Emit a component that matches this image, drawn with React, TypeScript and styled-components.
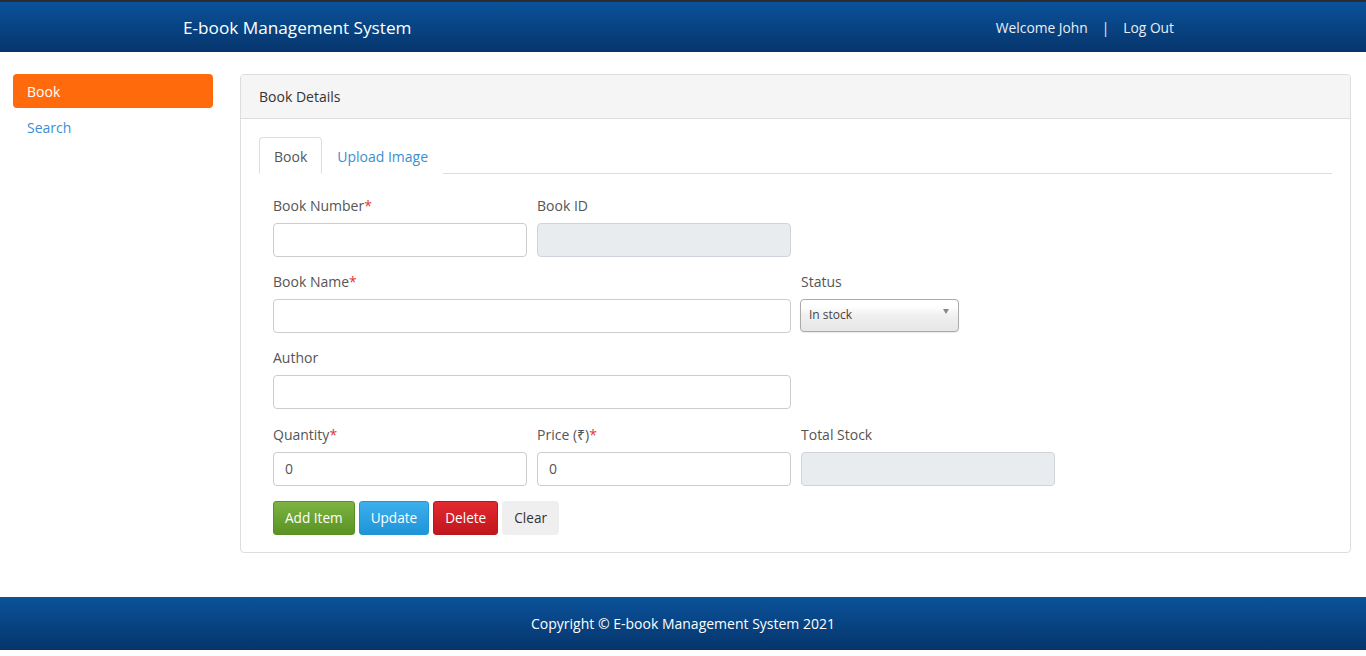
import React from "react";
import styled, { createGlobalStyle } from "styled-components";

const GlobalStyle = createGlobalStyle`
  html, body {
    margin: 0;
    padding: 0;
    background: #fff;
    font-family: "Open Sans", "Noto Sans", sans-serif;
    font-size: 14px;
    color: #333;
  }
  * { box-sizing: border-box; }
`;

const Page = styled.div`
  min-height: 656px;
  display: flex;
  flex-direction: column;
`;

const Header = styled.header`
  height: 52px;
  border-top: 2px solid #2d2d2d;
  background: linear-gradient(to bottom, #0a529a, #06356c);
  display: flex;
  justify-content: center;
`;

const HeaderInner = styled.div`
  width: 1000px;
  display: flex;
  align-items: center;
  justify-content: space-between;
  padding: 0 9px 0 0;
  color: #fff;
`;

const Brand = styled.div`
  font-size: 17.2px;
  color: #fff;
`;

const UserNav = styled.div`
  display: flex;
  align-items: center;
  gap: 14px;
  font-size: 13.8px;
  color: #e8eef6;
`;

const Body = styled.div`
  display: flex;
  gap: 27px;
  padding: 22px 15px 40px 13px;
`;

const Sidebar = styled.nav`
  width: 200px;
  flex-shrink: 0;
  display: flex;
  flex-direction: column;
  gap: 2px;
`;

const NavItem = styled.a<{ $active?: boolean }>`
  display: block;
  height: 34px;
  line-height: 35px;
  padding: 0 14px;
  border-radius: 4px;
  text-decoration: none;
  font-size: 14px;
  background: ${(p) => (p.$active ? "#ff6a0c" : "transparent")};
  color: ${(p) => (p.$active ? "#fff" : "#3a8fd2")};
`;

const Panel = styled.section`
  flex: 1;
  border: 1px solid #ddd;
  border-radius: 4px;
  overflow: hidden;
`;

const PanelHeading = styled.div`
  height: 44px;
  background: #f5f5f5;
  border-bottom: 1px solid #ddd;
  padding: 0 18px;
  display: flex;
  align-items: center;
  font-size: 14px;
  color: #333;
`;

const PanelBody = styled.div`
  padding: 18px 18px 17px;
`;

const Tabs = styled.ul`
  list-style: none;
  margin: 0;
  padding: 0;
  display: flex;
  border-bottom: 1px solid #ddd;
`;

const Tab = styled.li<{ $active?: boolean }>`
  margin-bottom: -1px;
  padding: 0 14px;
  height: 37px;
  line-height: 37px;
  font-size: 14px;
  border: 1px solid ${(p) => (p.$active ? "#ddd" : "transparent")};
  border-bottom-color: ${(p) => (p.$active ? "#fff" : "transparent")};
  border-radius: 4px 4px 0 0;
  background: #fff;
  color: ${(p) => (p.$active ? "#555" : "#3a8fd2")};
`;

const Form = styled.div`
  padding: 22px 14px 0;
  display: grid;
  grid-template-columns: repeat(3, 254px);
  column-gap: 10px;
  row-gap: 15.2px;
`;

const Field = styled.div<{ $span?: number }>`
  grid-column: span ${(p) => p.$span ?? 1};
  display: flex;
  flex-direction: column;
  gap: 8px;
`;

const Label = styled.label`
  font-size: 14px;
  line-height: 19px;
  color: #555;
`;

const Req = styled.span`
  color: #e0353b;
`;

const Input = styled.input<{ $width?: number }>`
  height: 34px;
  width: ${(p) => (p.$width ? `${p.$width}px` : "100%")};
  border: 1px solid #ccc;
  border-radius: 4px;
  padding: 0 11px;
  font-family: inherit;
  font-size: 14px;
  color: #555;
  background: #fff;
  &:disabled {
    background: #e9ecef;
    border-color: #ced4da;
  }
`;

const Select = styled.div`
  position: relative;
  width: 159px;
  height: 33px;
  margin-left: -1px;
  border: 1px solid #aaa;
  border-radius: 4px;
  background: linear-gradient(to bottom, #fff 20%, #f0f0f0 50%, #e6e6e6 100%);
  box-shadow: 0 1px 1px rgba(0, 0, 0, 0.08);
  font-size: 12px;
  color: #444;
  line-height: 30px;
  padding: 0 8px;
`;

const Caret = styled.span`
  position: absolute;
  right: 9px;
  top: 9px;
  width: 0;
  height: 0;
  border-left: 3px solid transparent;
  border-right: 3px solid transparent;
  border-top: 5px solid #888;
`;

const Actions = styled.div`
  grid-column: span 3;
  display: flex;
  gap: 4px;
`;

const tones = {
  green: ["#7cb342", "#5a9324", "#5a8f25", "#fff"],
  blue: ["#3db0ec", "#1e95d9", "#2196d6", "#fff"],
  red: ["#e2292f", "#c1161d", "#b8171d", "#fff"],
  grey: ["#efefef", "#efefef", "#efefef", "#333"],
} as const;

const Button = styled.button<{ $tone: keyof typeof tones }>`
  height: 34px;
  padding: 0 11px;
  border: 1px solid ${(p) => tones[p.$tone][2]};
  border-radius: 3px;
  background: linear-gradient(
    to bottom,
    ${(p) => tones[p.$tone][0]},
    ${(p) => tones[p.$tone][1]}
  );
  color: ${(p) => tones[p.$tone][3]};
  font-family: inherit;
  font-size: 13.6px;
  cursor: pointer;
`;

const Footer = styled.footer`
  margin-top: auto;
  height: 53px;
  margin-bottom: 6px;
  background: linear-gradient(to bottom, #0a529a, #06356c);
  display: flex;
  align-items: center;
  justify-content: center;
  color: #fff;
  font-size: 14px;
`;

export default function App() {
  return (
    <Page>
      <GlobalStyle />
      <Header>
        <HeaderInner>
          <Brand>E-book Management System</Brand>
          <UserNav>
            <span>Welcome John</span>
            <span>|</span>
            <span>Log Out</span>
          </UserNav>
        </HeaderInner>
      </Header>
      <Body>
        <Sidebar>
          <NavItem $active>Book</NavItem>
          <NavItem>Search</NavItem>
        </Sidebar>
        <Panel>
          <PanelHeading>Book Details</PanelHeading>
          <PanelBody>
            <Tabs>
              <Tab $active>Book</Tab>
              <Tab>Upload Image</Tab>
            </Tabs>
            <Form>
              <Field>
                <Label>
                  Book Number<Req>*</Req>
                </Label>
                <Input />
              </Field>
              <Field $span={2}>
                <Label>Book ID</Label>
                <Input disabled $width={254} />
              </Field>
              <Field $span={2}>
                <Label>
                  Book Name<Req>*</Req>
                </Label>
                <Input />
              </Field>
              <Field>
                <Label>Status</Label>
                <Select>
                  In stock
                  <Caret />
                </Select>
              </Field>
              <Field $span={2}>
                <Label>Author</Label>
                <Input />
              </Field>
              <div />
              <Field>
                <Label>
                  Quantity<Req>*</Req>
                </Label>
                <Input defaultValue="0" />
              </Field>
              <Field>
                <Label>
                  Price (₹)<Req>*</Req>
                </Label>
                <Input defaultValue="0" />
              </Field>
              <Field>
                <Label>Total Stock</Label>
                <Input disabled />
              </Field>
              <Actions>
                <Button $tone="green">Add Item</Button>
                <Button $tone="blue">Update</Button>
                <Button $tone="red">Delete</Button>
                <Button $tone="grey">Clear</Button>
              </Actions>
            </Form>
          </PanelBody>
        </Panel>
      </Body>
      <Footer>Copyright © E-book Management System 2021</Footer>
    </Page>
  );
}
